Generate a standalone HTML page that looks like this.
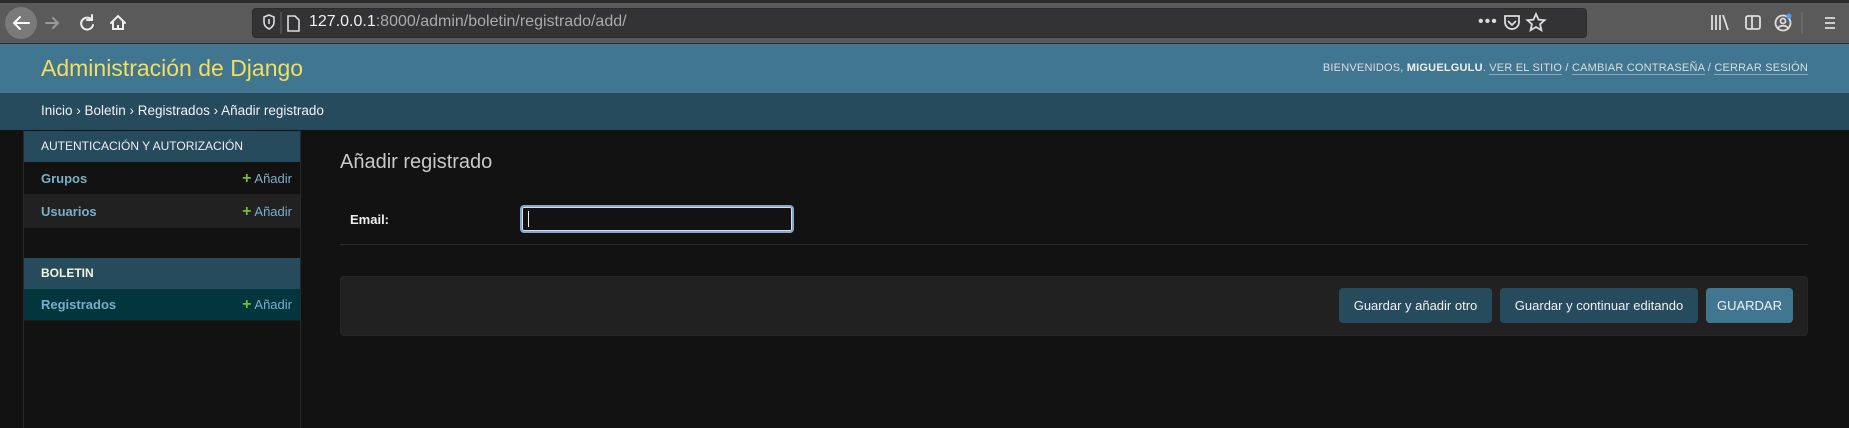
<!DOCTYPE html>
<html><head><meta charset="utf-8"><style>
*{margin:0;padding:0;box-sizing:border-box}
body{width:1849px;height:428px;overflow:hidden;background:#121212;font-family:"Liberation Sans",sans-serif;position:relative}
.abs{position:absolute}
#tb{left:0;top:0;width:1849px;height:44px;background:#5a5a5a;border-bottom:1px solid #2a2a2a}
#tabline{left:0;top:0;width:1849px;height:3px;background:#2b2b2b}
#url{left:252px;top:8px;width:1335px;height:30px;background:#333335;border-radius:4px;border:1px solid #2a2a2a}
#urltxt{left:309px;top:13px;font-size:16px;color:#aaa}
#urltxt b{color:#f0f0f0;font-weight:normal}
#hdr{left:0;top:44px;width:1849px;height:49px;background:#417690}
#title{left:41px;top:55px;font-size:23px;color:#f5dd5d;font-weight:300}
#tools{right:41px;top:62px;font-size:11px;color:#ddd;letter-spacing:.2px}
#tools a{color:#ddd;text-decoration:none;border-bottom:1px solid #8aaabb}
#tools b{font-weight:bold;color:#eee}
#bc{left:0;top:93px;width:1849px;height:37px;background:#264b5d}
#bctxt{left:41px;top:103px;font-size:13.5px;color:#f2f2f2}
#lstrip{left:0;top:130px;width:24px;height:298px;background:#121212;border-right:1px solid #2a2a2a}
#side{left:24px;top:130px;width:277px;height:298px;border-right:1px solid #2a2a2a}
.sh{position:absolute;left:0;width:276px;background:#264b5d;color:#eee;font-size:12px;padding-left:17px}
.row{position:absolute;left:0;width:276px;font-size:13px;font-weight:bold;color:#79aec8;padding-left:17px;border-bottom:1px solid #1e1e1e}
.add{position:absolute;right:8px;font-weight:normal;color:#79aec8}
.add i{font-style:normal;color:#70bf2b;font-weight:bold;font-size:16px}
#h1{left:340px;top:151px;font-size:20px;color:#c8c8c8;font-weight:300}
#lbl{left:350px;top:212px;font-size:13px;font-weight:bold;color:#eee}
#inp{left:520px;top:205px;width:274px;height:28px;border:2px solid #7ea7d8;border-radius:4px;background:#121212;box-shadow:inset 0 0 0 1px #ddd}
#caret{left:528px;top:211px;width:1px;height:16px;background:#eee}
#hr{left:340px;top:244px;width:1468px;height:1px;background:#2a2a2a}
#sub{left:340px;top:276px;width:1468px;height:60px;background:#212121;border-radius:4px;border:1px solid #262626}
.btn{position:absolute;top:288px;height:35px;border-radius:4px;background:#264b5d;color:#f0f0f0;font-size:13px;text-align:center;line-height:35px}
</style></head><body>
<div class="abs" id="tb"></div>
<div class="abs" id="tabline"></div>
<div class="abs" style="left:5px;top:7px;width:32px;height:32px;border-radius:50%;background:#7a7a7a"></div>
<svg class="abs" style="left:0;top:0" width="130" height="44" fill="none" stroke-width="2" stroke-linecap="round">
<path d="M29 23H14M20 17l-6 6 6 6" stroke="#fff"/>
<path d="M58 23H46M53 18l5 5-5 5" stroke="#999"/>
<path d="M92 20a6 6 0 1 0 1 5M92 15v5h-5" stroke="#eee"/>
<path d="M111 23l7-7 7 7M113 21v8h10v-8" stroke="#eee"/><rect x="117" y="25" width="2" height="3" fill="#eee"/>
</svg>
<div class="abs" id="url"></div>
<svg class="abs" style="left:255px;top:10px" width="54" height="26" fill="none" stroke="#ddd" stroke-width="1.6">
<path d="M9 7l5-2 5 2v5c0 4-3 6-5 7-2-1-5-3-5-7z"/><path d="M14 9v5"/>
<path d="M26 2v22" stroke="#555"/>
<path d="M33 6h7l4 4v11h-11z"/>
</svg>
<div class="abs" id="urltxt"><b>127.0.0.1</b>:8000/admin/boletin/registrado/add/</div>
<div class="abs" style="left:1478px;top:13px;color:#ddd;font-size:16px;letter-spacing:1px">•••</div>
<svg class="abs" style="left:1500px;top:10px" width="90" height="26" fill="none" stroke="#ddd" stroke-width="1.8">
<path d="M5 6h14v6a7 7 0 0 1-14 0z"/><path d="M8 11l4 4 4-4"/>
<path d="M36 4l2.6 5.6 6 .6-4.5 4 1.3 6-5.4-3.2-5.4 3.2 1.3-6-4.5-4 6-.6z"/>
</svg>
<svg class="abs" style="left:1700px;top:10px" width="149" height="26" fill="none" stroke="#ddd" stroke-width="1.8">
<path d="M12 5v15M16 5v15M20 5v15M23 5l5 15"/>
<rect x="46" y="6" width="14" height="13" rx="2"/><path d="M52 6v13"/>
<circle cx="83" cy="13" r="7.5"/><circle cx="83" cy="11" r="2.5"/><path d="M78 18c2-3 8-3 10 0"/>
<circle cx="89" cy="6" r="2.5" fill="#45a1ff" stroke="none"/>
<path d="M102 2v22" stroke="#777" stroke-width="1"/>
<path d="M125 8h10M125 13h10M125 18h10"/>
</svg>
<div class="abs" id="hdr"></div>
<div class="abs" id="title">Administración de Django</div>
<div class="abs" id="tools">BIENVENIDOS, <b>MIGUELGULU</b>. <a>VER EL SITIO</a> / <a>CAMBIAR CONTRASEÑA</a> / <a>CERRAR SESIÓN</a></div>
<div class="abs" id="bc"></div>
<div class="abs" id="bctxt">Inicio › Boletin › Registrados › Añadir registrado</div>
<div class="abs" id="lstrip"></div>
<div class="abs" id="side">
<div class="sh" style="top:1px;height:31px;line-height:31px">AUTENTICACIÓN Y AUTORIZACIÓN</div>
<div class="row" style="top:32px;height:33px;line-height:33px">Grupos<span class="add"><i>+</i> Añadir</span></div>
<div class="row" style="top:65px;height:33px;line-height:33px;background:#212121">Usuarios<span class="add"><i>+</i> Añadir</span></div>
<div class="sh" style="top:128px;height:31px;line-height:31px;font-weight:bold;color:#f5f5dc">BOLETIN</div>
<div class="row" style="top:159px;height:32px;line-height:32px;background:#02363c">Registrados<span class="add"><i>+</i> Añadir</span></div>
</div>
<div class="abs" id="h1">Añadir registrado</div>
<div class="abs" id="lbl">Email:</div>
<div class="abs" id="inp"></div>
<div class="abs" id="caret"></div>
<div class="abs" id="hr"></div>
<div class="abs" id="sub"></div>
<div class="btn" style="left:1339px;width:153px">Guardar y añadir otro</div>
<div class="btn" style="left:1500px;width:198px">Guardar y continuar editando</div>
<div class="btn" style="left:1706px;width:87px;background:#417690">GUARDAR</div>
</body></html>
